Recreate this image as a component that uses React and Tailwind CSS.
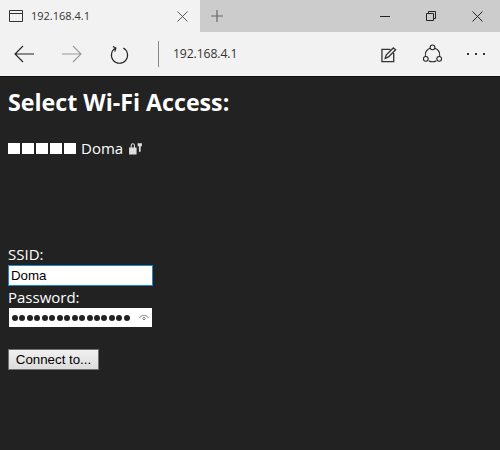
import React from "react";

const segoe = "font-['Open_Sans','Noto_Sans',sans-serif]";

function WifiSquares() {
  return (
    <span className="flex gap-[2px]">
      {[0, 1, 2, 3, 4].map((i) => (
        <span key={i} className="h-[11px] w-[12px] bg-white" />
      ))}
    </span>
  );
}

export default function App() {
  return (
    <div className={`flex h-[450px] w-[500px] flex-col overflow-hidden bg-[#222222] ${segoe}`}>
      <header className="flex h-[32px] bg-[#cccccc]">
        <div className="flex w-[200px] items-center bg-[#f2f2f2] pl-[9px]">
          <svg width="15" height="13" viewBox="0 0 15 13" fill="none" stroke="#333" strokeWidth="1">
            <path d="M.5.5h13v11H.5zM.5 3.500h13" />
          </svg>
          <span className="ml-[7px] w-[58px] text-[11px] whitespace-nowrap text-[#333]">192.168.4.1</span>
          <svg className="ml-[88px]" width="11" height="11" viewBox="0 0 11 11" stroke="#555" strokeWidth="1">
            <path d="M.5.5l10 10M10.500.5l-10 10" />
          </svg>
        </div>
        <div className="flex w-[34px] items-center justify-center">
          <svg width="12" height="12" viewBox="0 0 12 12" stroke="#666" strokeWidth="1.200">
            <path d="M6 0v12M0 6h12" />
          </svg>
        </div>
        <div className="ml-auto flex">
          <div className="flex w-[46px] items-center justify-center">
            <span className="h-[1px] w-[10px] bg-[#222]" />
          </div>
          <div className="flex w-[46px] items-center justify-center">
            <svg width="10" height="10" viewBox="0 0 10 10" fill="none" stroke="#222" strokeWidth="1">
              <path d="M.5 2.500h7v7h-7zM2.500 2.500v-2h7v7h-2" />
            </svg>
          </div>
          <div className="flex w-[46px] items-center justify-center">
            <svg width="11" height="11" viewBox="0 0 11 11" stroke="#222" strokeWidth="1">
              <path d="M.5.5l10 10M10.500.5l-10 10" />
            </svg>
          </div>
        </div>
      </header>

      <nav className="flex h-[44px] items-center bg-[#f2f2f2] pl-[14px] text-[#333]">
        <svg width="20" height="18" viewBox="0 0 20 18" fill="none" stroke="#222" strokeWidth="1.100">
          <path d="M1 9h19M9 1L1 9l8 8" />
        </svg>
        <svg className="ml-[28px]" width="20" height="18" viewBox="0 0 20 18" fill="none" stroke="#999" strokeWidth="1.100">
          <path d="M0 9h19M11 1l8 8-8 8" />
        </svg>
        <svg className="ml-[28px]" width="19" height="19" viewBox="0 0 20 20" fill="none" stroke="#222" strokeWidth="1.200">
          <path d="M6 3.200a8.500 8.500 0 1 0 8 0M3 1.500l3.200 1.700L5 7" />
        </svg>
        <span className="ml-[29px] h-[26px] w-[1px] bg-[#888]" />
        <span className="ml-[14px] w-[64px] text-[12.200px] tracking-[-0.1px] whitespace-nowrap text-[#333]">192.168.4.1</span>
        <svg className="ml-[144px]" width="16" height="17" viewBox="0 0 17 17" fill="none" stroke="#333" strokeWidth="1.400">
          <path d="M13.500 7V16H1V3h9" />
          <path d="M4.500 12.500l1-3.500L13 1.500l2.500 2L8 11z" />
        </svg>
        <svg className="ml-[25px]" width="21" height="21" viewBox="0 0 22 22" fill="none" stroke="#222" strokeWidth="1.100">
          <path d="M8.300 4.500a8 8 0 0 0-4.800 8.300M7 17.500a8 8 0 0 0 8 0M18.500 12.800a8 8 0 0 0-4.800-8.300" />
          <circle cx="11" cy="3.500" r="2.500" />
          <circle cx="4" cy="15.500" r="2.500" />
          <circle cx="18" cy="15.500" r="2.500" />
        </svg>
        <span className="ml-[24px] flex gap-[6px]">
          <span className="h-[2px] w-[2px] bg-[#333]" />
          <span className="h-[2px] w-[2px] bg-[#333]" />
          <span className="h-[2px] w-[2px] bg-[#333]" />
        </span>
      </nav>

      <main className="flex-1 border-t border-[#111] px-[8px] text-white">
        <h1 className="mt-[11px] text-[23.200px] leading-[28px] font-bold">Select Wi-Fi Access:</h1>
        <div className="mt-[22px] flex h-[20px] items-center">
          <WifiSquares />
          <span className="ml-[5px] text-[15px]">Doma</span>
          <svg className="ml-[5px]" width="15" height="13" viewBox="0 0 14 12" fill="#ddd">
            <path d="M1 5h7v6.500H1zM2.500 5V3a2 2 0 0 1 4 0v2h-1V3a1 1 0 0 0-2 0v2z" />
            <path d="M9 1h4v3h-1.200v5h-1.600V4H9z" />
          </svg>
        </div>
        <div className="mt-[86px] mb-[1px] text-[15px] leading-[20px]">SSID:</div>
        <div className="h-[21px] w-[145px] border border-[#1a8ac9] bg-white pl-[2px] font-['Liberation_Sans',sans-serif] text-[13.300px] leading-[19px] text-black">
          Doma
        </div>
        <div className="mt-[1px] text-[15px] leading-[20px]">Password:</div>
        <div className="mt-[1px] ml-[1px] flex h-[19px] w-[143px] items-center bg-white pl-[3px]">
          <span className="flex w-[118px] justify-between">
            {Array.from({ length: 16 }, (_, i) => (
              <span key={i} className="h-[6px] w-[6px] rounded-full bg-[#222]" />
            ))}
          </span>
          <svg className="ml-[9px]" width="10" height="6" viewBox="0 0 10 6" fill="none" stroke="#666" strokeWidth="0.800">
            <path d="M.5 3a5 5 0 0 1 9 0" />
            <circle cx="5" cy="3.500" r="1.200" />
          </svg>
        </div>
        <button className="mt-[22px] flex h-[21px] w-[91px] items-center justify-center border border-[#707070] bg-[linear-gradient(#f0f0f0,#dcdcdc)] font-['Liberation_Sans',sans-serif] text-[13.300px] text-black">
          Connect to...
        </button>
      </main>
    </div>
  );
}
